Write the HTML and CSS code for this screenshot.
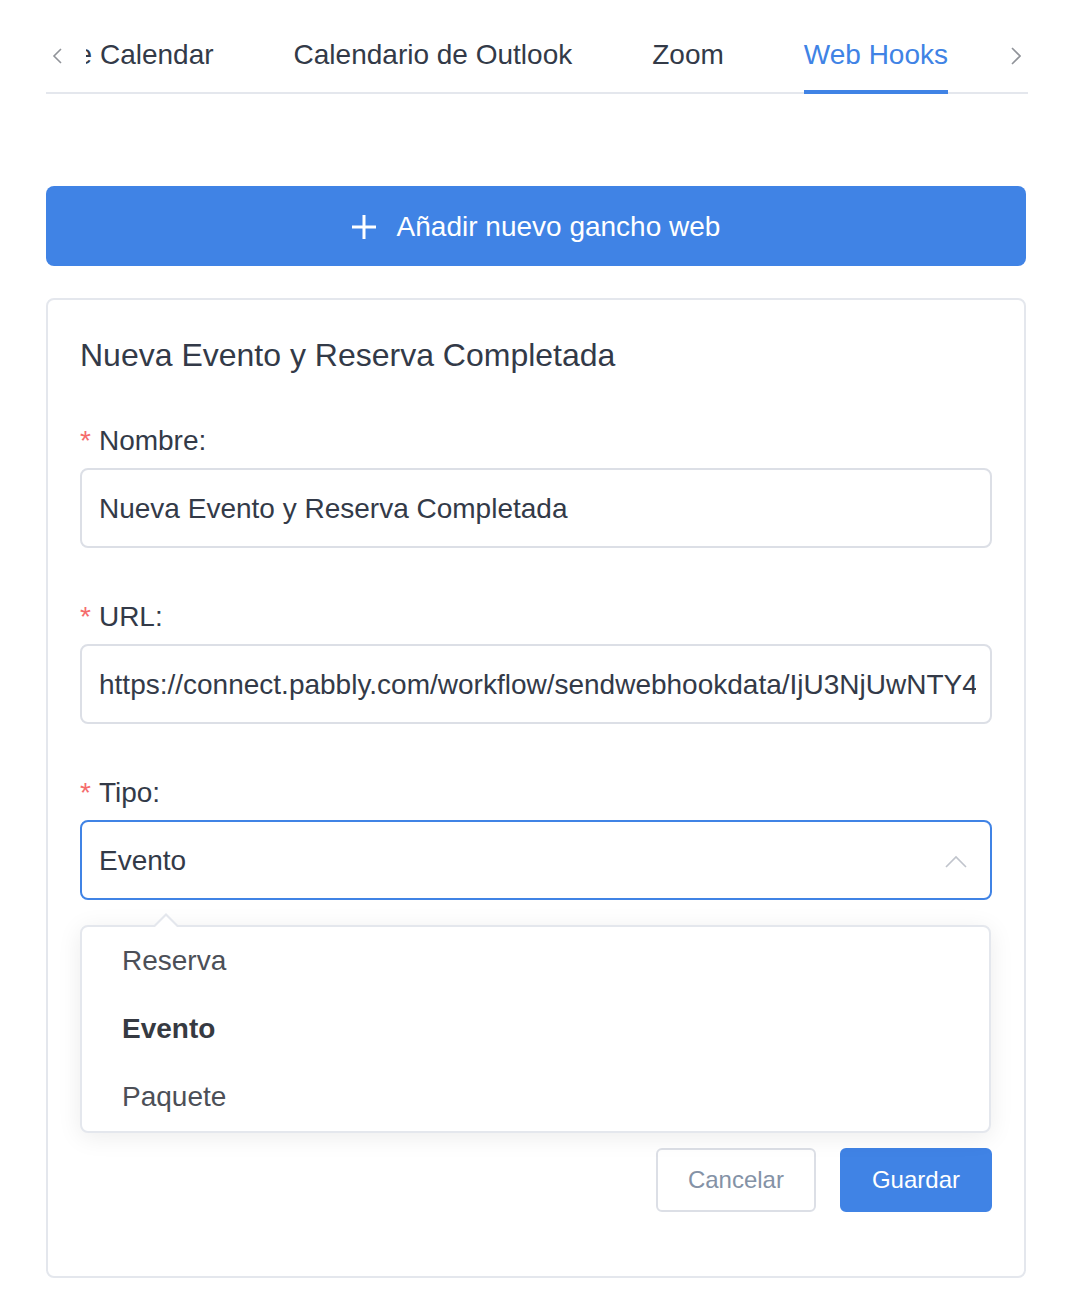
FILE: index.html
```html
<!DOCTYPE html>
<html lang="es">

<head>
  <meta charset="UTF-8">
  <meta name="viewport" content="width=device-width, initial-scale=1.0">
  <title>Web Hooks</title>
  <link rel="stylesheet" href="styles.css">
</head>

<body>
  <div class="page">

    <!-- integration tabs, scrolled to the end -->
    <div class="tabs">
      <span class="tabsPrev">
        <svg width="10" height="16" viewBox="0 0 10 16"><path d="M9 1 L2 8 L9 15" fill="none" stroke="#909399" stroke-width="1.6"/></svg>
      </span>
      <div class="tabsScroll">
        <div class="tabsNav">
          <div class="tabItem">Google Calendar</div>
          <div class="tabItem">Calendario de Outlook</div>
          <div class="tabItem">Zoom</div>
          <div class="tabItem isActive">Web Hooks</div>
        </div>
      </div>
      <span class="tabsNext">
        <svg width="10" height="18" viewBox="0 0 10 18"><path d="M1 1 L9 9 L1 17" fill="none" stroke="#909399" stroke-width="1.6"/></svg>
      </span>
    </div>

    <button class="addBtn">
      <svg width="24" height="24" viewBox="0 0 24 24"><path d="M12 0 V24 M0 12 H24" stroke="#ffffff" stroke-width="3"/></svg>
      <span>Añadir nuevo gancho web</span>
    </button>

    <div class="hookCard">
      <h2 class="hookTitle">Nueva Evento y Reserva Completada</h2>

      <form class="hookForm">
        <div class="formItem">
          <label class="formLabel" for="name"><span class="req">*</span>Nombre:</label>
          <input class="formInput" id="name" type="text" value="Nueva Evento y Reserva Completada">
        </div>

        <div class="formItem">
          <label class="formLabel" for="url"><span class="req">*</span>URL:</label>
          <input class="formInput" id="url" type="text" value="https://connect.pabbly.com/workflow/sendwebhookdata/IjU3NjUwNTY4MDYzNjA0MzUi_pc">
        </div>

        <div class="formItem typeItem">
          <label class="formLabel"><span class="req">*</span>Tipo:</label>
          <div class="selectBox">
            <span>Evento</span>
            <svg width="22" height="13" viewBox="0 0 22 13"><path d="M1 12 L11 2 L21 12" fill="none" stroke="#c0c4cc" stroke-width="1.6"/></svg>
          </div>

          <!-- open options list -->
          <ul class="selectDropdown">
            <li>Reserva</li>
            <li class="selected">Evento</li>
            <li>Paquete</li>
          </ul>
        </div>

        <div class="formActions">
          <button type="button" class="btn btnCancel">Cancelar</button>
          <button type="button" class="btn btnSave">Guardar</button>
        </div>
      </form>
    </div>

  </div>
</body>

</html>
```

FILE: styles.css
```css
body {
  margin: 0;
  background: #ffffff;
  font-family: "Liberation Sans", Arial, sans-serif;
  color: #333a48;
}

.page {
  padding: 14px 50px 28px 46px;
}

/* tabs */
.tabs {
  display: flex;
  height: 80px;
  margin-right: -2px;
  background: linear-gradient(#e4e7ed, #e4e7ed) left bottom / 100% 2px no-repeat;
}

.tabsPrev,
.tabsNext {
  flex: 0 0 40px;
  display: flex;
  align-items: center;
  box-sizing: border-box;
  padding-top: 3px;
}

.tabsPrev {
  padding-left: 6px;
}

.tabsNext {
  padding-left: 23px;
}

.tabsScroll {
  flex: 1;
  overflow: hidden;
}

.tabsNav {
  display: flex;
  justify-content: flex-end;
  height: 100%;
}

.tabItem {
  flex-shrink: 0;
  margin: 0 40px;
  padding-top: 2px;
  font-size: 28px;
  line-height: 78px;
  white-space: nowrap;
  color: #333a48;
}

.tabItem.isActive {
  color: #4083e5;
  box-shadow: inset 0 -4px 0 #4083e5;
}

/* add button */
.addBtn {
  display: flex;
  align-items: center;
  justify-content: center;
  gap: 21px;
  width: 100%;
  height: 80px;
  margin-top: 92px;
  padding-top: 2px;
  border: none;
  border-radius: 8px;
  background: #4083e5;
  color: #ffffff;
  font-family: inherit;
  font-size: 28px;
  cursor: pointer;
}

/* card */
.hookCard {
  margin-top: 32px;
  padding: 32px 32px 64px;
  border: 2px solid #e4e7ed;
  border-radius: 8px;
}

.hookTitle {
  margin: 0 0 42px;
  font-size: 32px;
  font-weight: 400;
  line-height: 46px;
  color: #333a48;
}

.formItem {
  margin-bottom: 48px;
}

.formLabel {
  display: block;
  margin-bottom: 8px;
  padding-top: 1px;
  font-size: 28px;
  line-height: 39px;
  color: #333a48;
}

.req {
  color: #f56c6c;
  margin-right: 8px;
}

.formInput {
  display: block;
  box-sizing: border-box;
  width: 100%;
  height: 80px;
  padding: 2px 14px 0 17px;
  border: 2px solid #dcdfe6;
  border-radius: 8px;
  outline: none;
  font-family: inherit;
  font-size: 28px;
  color: #333a48;
}

.typeItem {
  position: relative;
  margin-bottom: 0;
}

.selectBox {
  display: flex;
  align-items: center;
  justify-content: space-between;
  box-sizing: border-box;
  height: 80px;
  padding: 2px 23px 0 17px;
  border: 2px solid #4083e5;
  border-radius: 8px;
  font-size: 28px;
}

.selectDropdown {
  position: absolute;
  top: 153px;
  left: 0;
  width: 911px;
  box-sizing: border-box;
  margin: 0;
  padding: 0;
  list-style: none;
  background: #ffffff;
  border: 2px solid #e4e7ed;
  border-radius: 8px;
  box-shadow: 0 4px 24px rgba(0, 0, 0, 0.08);
  z-index: 2;
}

.selectDropdown::before,
.selectDropdown::after {
  content: "";
  position: absolute;
  left: 72px;
  border: 12px solid transparent;
  border-top: 0;
}

.selectDropdown::before {
  top: -14px;
  border-bottom-color: #e4e7ed;
}

.selectDropdown::after {
  top: -11px;
  border-bottom-color: #ffffff;
}

.selectDropdown li {
  height: 68px;
  padding: 0 40px;
  font-size: 28px;
  line-height: 68px;
  color: #4c4f57;
}

.selectDropdown li.selected {
  font-weight: 700;
  color: #363a42;
}

/* footer buttons */
.formActions {
  display: flex;
  justify-content: flex-end;
  gap: 24px;
  margin-top: 248px;
}

.btn {
  height: 64px;
  padding: 0 30px;
  border: 2px solid #dcdfe6;
  border-radius: 6px;
  font-family: inherit;
  font-size: 24px;
  cursor: pointer;
}

.btnCancel {
  background: #ffffff;
  color: #8492a6;
}

.btnSave {
  background: #4083e5;
  border-color: #4083e5;
  color: #ffffff;
}
```
